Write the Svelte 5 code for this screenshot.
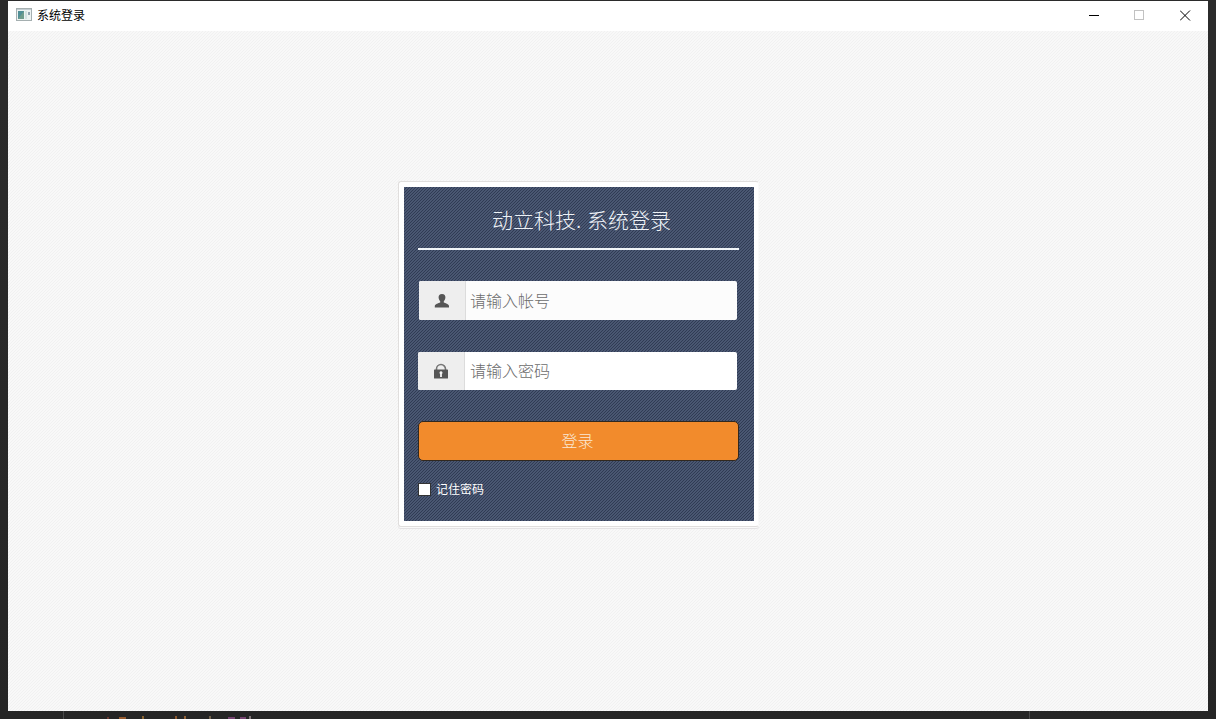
<script>
  let account = $state('');
  let password = $state('');
  let remember = $state(false);
  const fragments = [
    { gap: 107, w: 2, h: 2, c: '#6a3830' },
    { gap: 10, w: 7, h: 2, c: '#96592c' },
    { gap: 16, w: 2, h: 3, c: '#8a632f' },
    { gap: 31, w: 2, h: 3, c: '#8a562c' },
    { gap: 7, w: 2, h: 3, c: '#906035' },
    { gap: 23, w: 2, h: 3, c: '#70604a' },
    { gap: 17, w: 7, h: 2, c: '#74426f' },
    { gap: 5, w: 6, h: 2, c: '#74426f' },
    { gap: 3, w: 2, h: 3, c: '#807478' }
  ];
</script>

<div class="desktop">
  <div class="window">
    <header>
      <svg class="app-icon" width="16" height="14" viewBox="0 0 16 14">
        <rect x=".5" y=".5" width="15" height="12" fill="#edf2f1" stroke="#a5afb0" />
        <path d="M1 1.5h14" stroke="#c3cdd2" />
        <rect x="2" y="3" width="6" height="8" fill="#508f96" />
        <path d="M2 11l6-8v8z" fill="#6f9c8c" />
        <rect x="9" y="3" width="2" height="8" fill="#d3e2e2" />
        <rect x="12" y="4" width="2" height="3" fill="#91a3af" />
      </svg>
      <span class="caption">系统登录</span>
      <div class="controls">
        <svg width="11" height="11" viewBox="0 0 11 11"><path d="M0 5.5h10" stroke="#000" /></svg>
        <svg width="11" height="11" viewBox="0 0 11 11"><rect x=".5" y=".5" width="9" height="9" fill="none" stroke="#c2c2c2" /></svg>
        <svg width="11" height="11" viewBox="0 0 11 11"><path d="M0 .5l10 10M10 .5l-10 10" stroke="#000" /></svg>
      </div>
    </header>
    <main>
      <div class="frame">
        <form class="card" onsubmit={(e) => e.preventDefault()}>
          <h1>动立科技. 系统登录</h1>
          <label class="field account">
            <span class="badge">
              <svg width="16" height="14" viewBox="0 0 16 14" fill="#565656">
                <path d="M8 0c2.400 0 3.600 1.500 3.400 3.800C11.200 5.800 10.200 6.600 9.800 7.300v1.300c1.700.7 5 1.500 5.200 3.500V13.500H.8V12.100C1 10.100 4.400 9.300 6.200 8.600V7.300C5.800 6.600 4.800 5.800 4.600 3.800 4.400 1.500 5.600 0 8 0z" />
              </svg>
            </span>
            <input type="text" placeholder="请输入帐号" bind:value={account} />
          </label>
          <label class="field secret">
            <span class="badge">
              <svg width="16" height="16" viewBox="0 0 16 16">
                <path d="M3.500 7.500V6a4.500 4.500 0 0 1 9 0v1.500" fill="none" stroke="#777" stroke-width="1.600" />
                <rect x="1" y="6.500" width="14" height="9" rx=".6" fill="#565656" />
                <path d="M8 8.200a1.500 1.500 0 0 1 .9 2.700V14H7.100v-3.100A1.500 1.500 0 0 1 8 8.200z" fill="#f4f4f4" />
              </svg>
            </span>
            <input type="password" placeholder="请输入密码" bind:value={password} />
          </label>
          <button type="submit">登录</button>
          <label class="remember"><input type="checkbox" bind:checked={remember} /><span>记住密码</span></label>
        </form>
      </div>
    </main>
  </div>
  <footer>
    {#each fragments as f}
      <i style="margin-left:{f.gap}px;width:{f.w}px;height:{f.h}px;background:{f.c}"></i>
    {/each}
  </footer>
</div>

<style>
  :global(body) { margin: 0; }
  .desktop {
    box-sizing: border-box;
    width: 1216px;
    height: 719px;
    padding: 1px 8px 0;
    background: linear-gradient(#2b2b2b, #2b2b2b 100px, #252525);
    overflow: hidden;
    font-family: "Noto Sans CJK SC", sans-serif;
  }
  .window { height: 710px; display: flex; flex-direction: column; }
  header {
    height: 30px;
    display: flex;
    align-items: center;
    padding: 0 0 2px 8px;
    background: #fff;
    box-sizing: border-box;
  }
  .caption { margin-left: 5px; font-size: 12px; line-height: 28px; color: #000; }
  .controls { display: flex; gap: 34px; margin-left: auto; padding-right: 17px; }
  .controls svg:nth-child(2) { margin-right: 1px; }
  main {
    flex: 1;
    padding: 150px 0 0 390px;
    background: linear-gradient(135deg, #f8f8f8 42%, #f1f1f1 42% 58%, #f8f8f8 58%) 0 0 / 3px 3px;
  }
  .frame {
    box-sizing: border-box;
    width: 361px;
    height: 346px;
    padding: 5px 4px 5px 5px;
    border: 1px solid #e0dedd;
    border-right-color: #fafafa;
    border-radius: 3px;
    background: #fff;
    box-shadow: 0 1px #fafafa, 0 2px #e4e2e4;
  }
  .card {
    box-sizing: border-box;
    width: 350px;
    height: 334px;
    padding: 0 15px 0 14px;
    display: flex;
    flex-direction: column;
    background: linear-gradient(135deg, #4a5772 42%, #303b54 42% 58%, #4a5772 58%) 0 0 / 3px 3px;
  }
  h1 {
    box-sizing: border-box;
    height: 63px;
    margin: 0;
    padding: 1px 0 0 6px;
    border-bottom: 2px solid #f1f5f8;
    text-align: center;
    font-size: 21px;
    font-weight: 300;
    line-height: 62px;
    word-spacing: 1px;
    color: #eef2f7;
  }
  .field { display: flex; border-radius: 2px; overflow: hidden; background: #fff; }
  .account { height: 39px; margin: 31px 2px 0 1px; background: #fcfcfc; }
  .secret { height: 38px; margin: 32px 2px 0 0; }
  .badge {
    box-sizing: border-box;
    width: 47px;
    border-right: 1px solid #dcdcdc;
    background: #eee;
    display: grid;
    place-items: center;
  }
  .account .badge { padding-right: 1px; }
  .field input {
    flex: 1;
    min-width: 0;
    border: 0;
    outline: 0;
    padding: 0 0 2px 4px;
    background: none;
    font: 300 16px "Noto Sans CJK SC", sans-serif;
  }
  .secret input { padding-left: 5px; }
  .field input::placeholder { color: #6c6c6c; opacity: 1; }
  button {
    box-sizing: border-box;
    height: 40px;
    margin: 31px 0 0;
    padding: 0 2px 2px 0;
    border: 1px solid #302820;
    border-radius: 5px;
    background: #f28b2c;
    color: #fae8d5;
    font: 300 16px "Noto Sans CJK SC", sans-serif;
  }
  .remember { display: flex; align-items: center; height: 18px; margin-top: 19px; font-size: 12px; line-height: 18px; color: #fff; }
  .remember input {
    appearance: none;
    box-sizing: border-box;
    width: 13px;
    height: 13px;
    margin: 0 5px 0 0;
    border: 1px solid #333;
    background: #fff;
  }
  .remember input:checked { background: #f28b2c; }
  footer {
    height: 8px;
    margin: 0 -8px;
    display: flex;
    align-items: flex-end;
    background:
      linear-gradient(#484848, #484848) 63px 0 / 1px 8px no-repeat,
      linear-gradient(#484848, #484848) 1029px 0 / 1px 8px no-repeat,
      #252525;
  }
</style>
